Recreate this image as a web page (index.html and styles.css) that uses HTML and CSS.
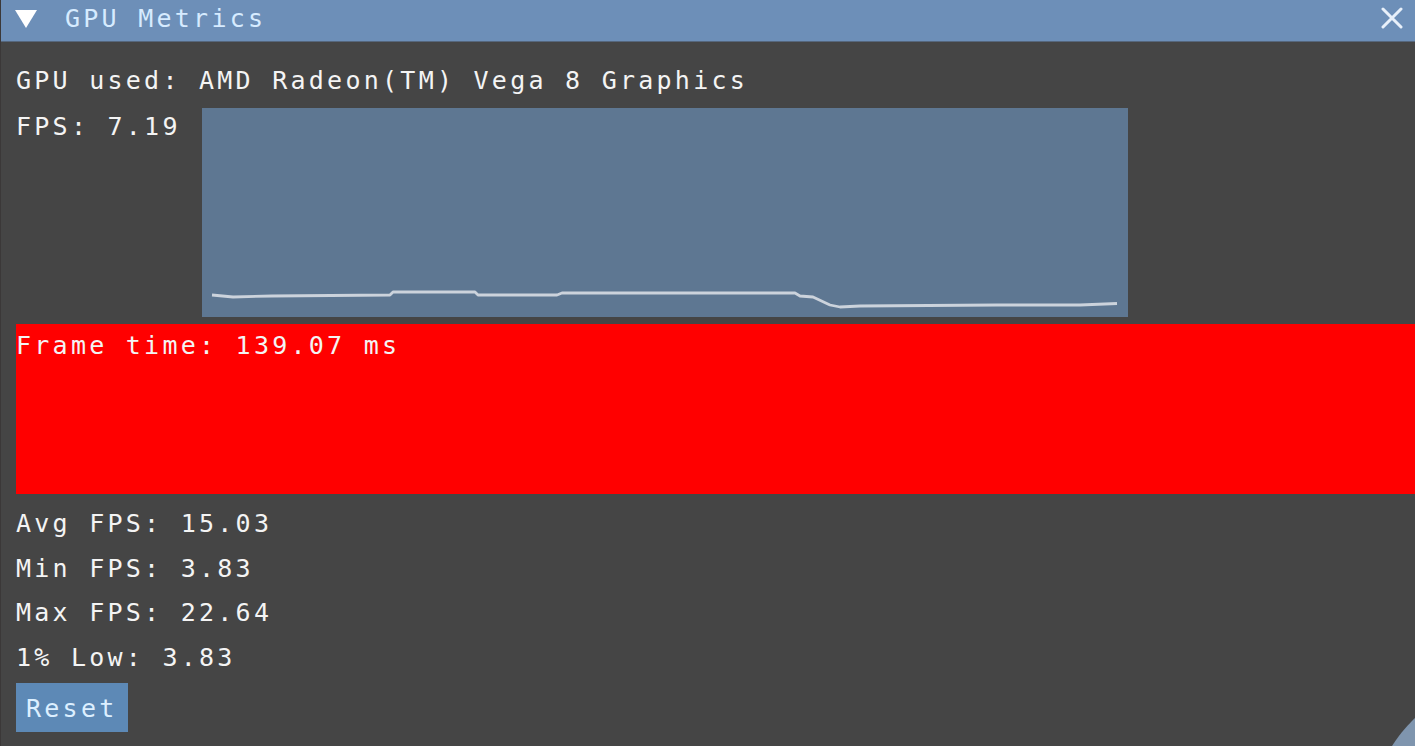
FILE: index.html
```html
<!DOCTYPE html>
<html>
<head>
<meta charset="utf-8">
<link rel="stylesheet" href="styles.css">
</head>
<body>
<div class="window">
  <div class="titlebar">
    <svg class="collapse" width="24" height="20" viewBox="0 0 24 20"><polygon points="1,1 23,1 12,19" fill="#ffffff"/></svg>
    <span class="title">GPU Metrics</span>
    <svg class="close" width="22" height="22" viewBox="0 0 22 22"><path d="M2 2 L20 20 M20 2 L2 20" stroke="#e8f0fa" stroke-width="3" stroke-linecap="round"/></svg>
  </div>
  <div class="body">
    <div class="line">GPU used: AMD Radeon(TM) Vega 8 Graphics</div>
    <div class="fps-row">
      <div class="fps-label">FPS: 7.19</div>
      <div class="plot">
        <svg width="926" height="209" viewBox="0 0 926 209">
          <polyline fill="none" stroke="#ccd3dc" stroke-width="2.8" stroke-linejoin="round" points="10,187 31,189 70,188 188,187 191,184 273,184 276,187 355,187 360,185 593,185 598,188 611,189 628,197 638,199 658,198 795,197 878,197 915,195.5"/>
        </svg>
      </div>
    </div>
    <div class="frame-bar"><span class="line">Frame time: 139.07 ms</span></div>
    <div class="stats">
      <div class="line">Avg FPS: 15.03</div>
      <div class="line">Min FPS: 3.83</div>
      <div class="line">Max FPS: 22.64</div>
      <div class="line">1% Low: 3.83</div>
    </div>
    <button class="reset">Reset</button>
  </div>
  <svg class="grip" width="30" height="30" viewBox="0 0 30 30"><path d="M30 2 C 24 8, 16 16, 7 30 L30 30 Z" fill="#7f95ae"/></svg>
</div>
</body>
</html>
```
FILE: styles.css
```css
html, body {
  margin: 0;
  padding: 0;
  width: 1415px;
  height: 746px;
  overflow: hidden;
  background: #454545;
}

.window {
  position: relative;
  width: 1415px;
  height: 746px;
  background: #454545;
  font-family: "DejaVu Sans Mono", "Liberation Mono", monospace;
  font-size: 25px;
  line-height: 26px;
  letter-spacing: 3.25px;
  color: #f4f4f4;
  overflow: hidden;
  border-left: 1px solid #3b3838;
  box-sizing: border-box;
}

.titlebar {
  height: 41px;
  border-bottom: 1px solid #56677d;
  background: #6d8fb8;
  display: flex;
  align-items: flex-start;
}

.collapse {
  margin: 9px 0 0 13px;
  flex-shrink: 0;
}

.title {
  margin: 6px 0 0 27px;
  color: #d6ebff;
}

.close {
  margin: 7px 0 0 auto;
  margin-right: 12px;
}

.body {
  padding: 26px 0 0 15px;
  display: flex;
  flex-direction: column;
  align-items: flex-start;
}

.line {
  display: block;
  height: 26px;
  white-space: nowrap;
}

.fps-row {
  margin-top: 14px;
  display: flex;
  align-items: flex-start;
}

.fps-label {
  width: 186px;
  flex-shrink: 0;
  padding-top: 6px;
  white-space: nowrap;
}

.plot {
  width: 926px;
  height: 209px;
  background: #5e7792;
}

.plot svg {
  display: block;
}

.frame-bar {
  margin-top: 7px;
  width: 1450px;
  height: 170px;
  background: #ff0000;
  padding-top: 9px;
  box-sizing: border-box;
}

.stats {
  margin-top: 17px;
  display: flex;
  flex-direction: column;
  gap: 18.67px;
}

.reset {
  margin-top: 12px;
  width: 112px;
  height: 49px;
  padding: 4px 0 0 10px;
  box-sizing: border-box;
  border: none;
  background: #5d89b6;
  color: #dcefff;
  font: inherit;
  letter-spacing: 3.25px;
  text-align: left;
  line-height: 26px;
}

.grip {
  position: absolute;
  right: 0;
  bottom: 0;
}
```
